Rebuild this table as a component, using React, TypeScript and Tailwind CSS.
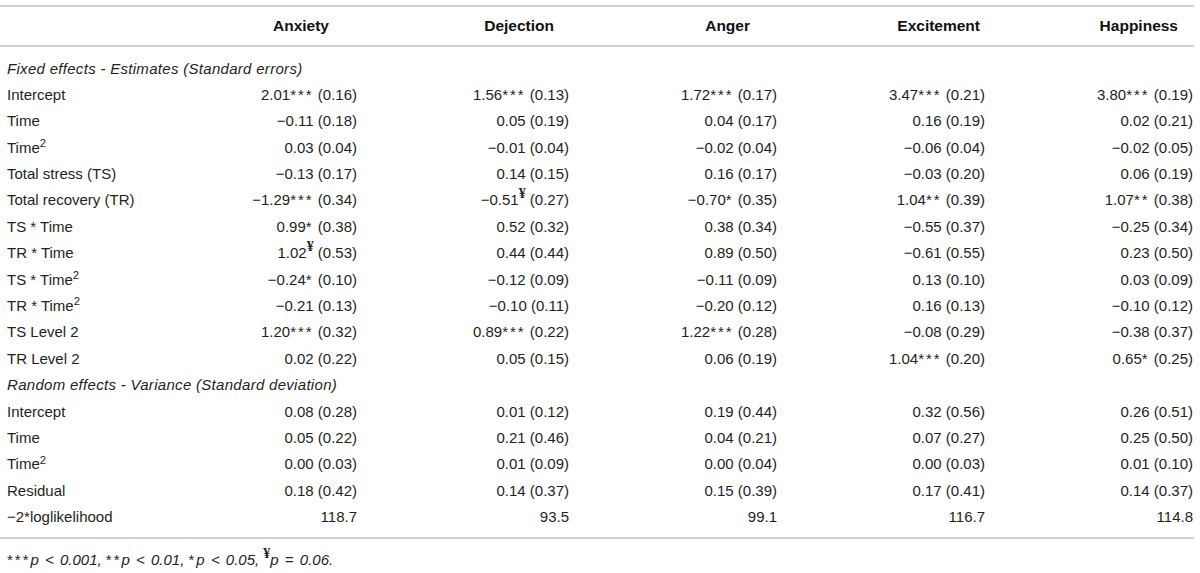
import React from "react";

const COLS = "grid grid-cols-[157px_200px_212px_208px_208px_208px] w-[1193px]";

const headers = [
  { name: "Anxiety", pr: "pr-[28px]" },
  { name: "Dejection", pr: "pr-[15px]" },
  { name: "Anger", pr: "pr-[27px]" },
  { name: "Excitement", pr: "pr-[5px]" },
  { name: "Happiness", pr: "pr-[15px]" },
];

type Row =
  | { section: string }
  | { label: React.ReactNode; values: string[] };

const Sq = ({ children }: { children: React.ReactNode }) => <sup>{children}</sup>;

const rows: Row[] = [
  { section: "Fixed effects - Estimates (Standard errors)" },
  { label: "Intercept", values: ["2.01*** (0.16)", "1.56*** (0.13)", "1.72*** (0.17)", "3.47*** (0.21)", "3.80*** (0.19)"] },
  { label: "Time", values: ["−0.11 (0.18)", "0.05 (0.19)", "0.04 (0.17)", "0.16 (0.19)", "0.02 (0.21)"] },
  { label: <>Time<Sq>2</Sq></>, values: ["0.03 (0.04)", "−0.01 (0.04)", "−0.02 (0.04)", "−0.06 (0.04)", "−0.02 (0.05)"] },
  { label: "Total stress (TS)", values: ["−0.13 (0.17)", "0.14 (0.15)", "0.16 (0.17)", "−0.03 (0.20)", "0.06 (0.19)"] },
  { label: "Total recovery (TR)", values: ["−1.29*** (0.34)", "−0.51¥ (0.27)", "−0.70* (0.35)", "1.04** (0.39)", "1.07** (0.38)"] },
  { label: "TS * Time", values: ["0.99* (0.38)", "0.52 (0.32)", "0.38 (0.34)", "−0.55 (0.37)", "−0.25 (0.34)"] },
  { label: "TR * Time", values: ["1.02¥ (0.53)", "0.44 (0.44)", "0.89 (0.50)", "−0.61 (0.55)", "0.23 (0.50)"] },
  { label: <>TS * Time<Sq>2</Sq></>, values: ["−0.24* (0.10)", "−0.12 (0.09)", "−0.11 (0.09)", "0.13 (0.10)", "0.03 (0.09)"] },
  { label: <>TR * Time<Sq>2</Sq></>, values: ["−0.21 (0.13)", "−0.10 (0.11)", "−0.20 (0.12)", "0.16 (0.13)", "−0.10 (0.12)"] },
  { label: "TS Level 2", values: ["1.20*** (0.32)", "0.89*** (0.22)", "1.22*** (0.28)", "−0.08 (0.29)", "−0.38 (0.37)"] },
  { label: "TR Level 2", values: ["0.02 (0.22)", "0.05 (0.15)", "0.06 (0.19)", "1.04*** (0.20)", "0.65* (0.25)"] },
  { section: "Random effects - Variance (Standard deviation)" },
  { label: "Intercept", values: ["0.08 (0.28)", "0.01 (0.12)", "0.19 (0.44)", "0.32 (0.56)", "0.26 (0.51)"] },
  { label: "Time", values: ["0.05 (0.22)", "0.21 (0.46)", "0.04 (0.21)", "0.07 (0.27)", "0.25 (0.50)"] },
  { label: <>Time<Sq>2</Sq></>, values: ["0.00 (0.03)", "0.01 (0.09)", "0.00 (0.04)", "0.00 (0.03)", "0.01 (0.10)"] },
  { label: "Residual", values: ["0.18 (0.42)", "0.14 (0.37)", "0.15 (0.39)", "0.17 (0.41)", "0.14 (0.37)"] },
  { label: "−2*loglikelihood", values: ["118.7", "93.5", "99.1", "116.7", "114.8"] },
];

function Yen() {
  return <sup className="font-['Liberation_Serif',serif] font-bold text-[14px] not-italic tracking-normal">¥</sup>;
}

function Stars({ n }: { n: string }) {
  return <span className="tracking-[2px] not-italic">{n}</span>;
}

// "¥" marks p = 0.06, stars get a little extra spacing like the source table
function Value({ text }: { text: string }) {
  const m = text.match(/^([^*¥ ]+)(\*+|¥)?(.*)$/);
  if (!m) return <>{text}</>;
  const [, num, mark, rest] = m;
  return (
    <>
      {num}
      {mark === "¥" ? <Yen /> : mark ? <Stars n={mark} /> : null}
      {rest}
    </>
  );
}

function Rule() {
  return <div className="h-[2px] w-[1194px] bg-[#d2d2d2]" />;
}

export default function App() {
  return (
    <div className="w-[1200px] h-[573px] bg-white pt-[5px] font-['Liberation_Sans',Arial,sans-serif] text-[15px] text-[#231f20] overflow-hidden">
      <Rule />

      {/* Header */}
      <div className={`${COLS} h-[38px] items-center font-bold text-[15.5px] text-[#111]`}>
        <div />
        {headers.map((h) => (
          <div key={h.name} className={`text-right ${h.pr}`}>
            {h.name}
          </div>
        ))}
      </div>

      <Rule />

      {/* Body */}
      <div className="pt-[8.6px] pb-[6px]">
        {rows.map((r, i) =>
          "section" in r ? (
            <div key={i} className="h-[26.4px] flex items-center pl-[7px] italic tracking-[0.3px]">
              {r.section}
            </div>
          ) : (
            <div key={i} className={`${COLS} h-[26.4px] items-center`}>
              <div className="pl-[7px] whitespace-nowrap">{r.label}</div>
              {r.values.map((v, j) => (
                <div key={j} className="text-right whitespace-nowrap">
                  <Value text={v} />
                </div>
              ))}
            </div>
          )
        )}
      </div>

      <Rule />

      {/* Footnote */}
      <div className="mt-[11px] pl-[7px] italic leading-[20px] whitespace-nowrap">
        <Stars n="***" />p <span className="px-[2px]">&lt;</span> 0.001, <Stars n="**" />p{" "}
        <span className="px-[2px]">&lt;</span> 0.01, <Stars n="*" />p <span className="px-[2px]">&lt;</span> 0.05,{" "}
        <Yen />p <span className="px-[2px]">=</span> 0.06.
      </div>
    </div>
  );
}
